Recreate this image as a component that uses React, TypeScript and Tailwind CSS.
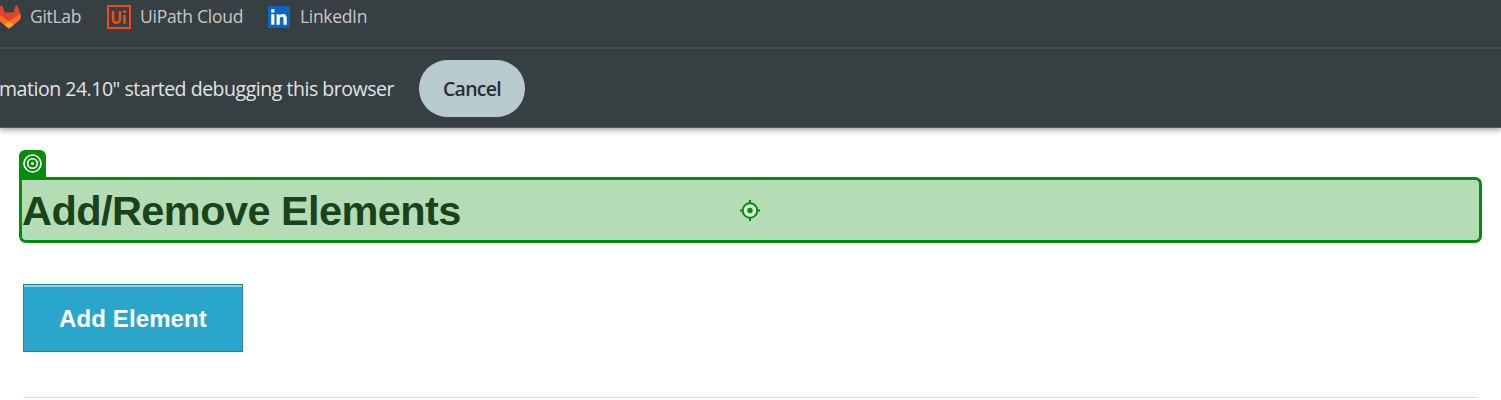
import React from "react";

function GitLabIcon() {
  return (
    <svg width="24" height="24" viewBox="0 0 24 24" className="block shrink-0">
      <path fill="#fc6d26" d="M23.4 9.3 20.2.9a.8.8 0 0 0-1.5.1l-2.200 6.700H7.500L5.300 1a.8.8 0 0 0-1.500-.1L.6 9.300a6 6 0 0 0 2 6.900L12 23.400l9.400-7.200a6 6 0 0 0 2-6.900Z" />
      <path fill="#e24329" d="M23.4 9.3 20.2.9a.8.8 0 0 0-1.5.1l-2.200 6.700H7.500L5.300 1a.8.8 0 0 0-1.500-.1L.6 9.300a10.800 10.800 0 0 1 4.300 1.900L12 16.600l7.100-5.400a10.800 10.800 0 0 1 4.300-1.900Z" />
      <path fill="#fca326" d="m7.400 20 4.600 3.500 4.600-3.500-4.600-3.400Z" />
    </svg>
  );
}

function UiPathIcon() {
  return (
    <svg width="24" height="24" viewBox="0 0 24 24" className="block shrink-0" fill="none" stroke="#fa4616">
      <rect x="1" y="1" width="22" height="22" strokeWidth="2" />
      <path d="M6 6v7.500c0 3 1.300 4.200 3.500 4.200S13 16.500 13 13.500V6" strokeWidth="2.600" />
      <path d="M17.500 10v8.800" strokeWidth="2.600" />
      <circle cx="17.500" cy="6.700" r="1.600" fill="#fa4616" stroke="none" />
    </svg>
  );
}

function LinkedInIcon() {
  return (
    <svg width="22" height="22" viewBox="0 0 22 22" className="block shrink-0">
      <rect width="22" height="22" rx="1.500" fill="#0a66c2" />
      <g fill="#fff">
        <circle cx="4.800" cy="4.900" r="1.900" />
        <path d="M3.200 8.200h3.200v10.500H3.200z" />
        <path d="M8.500 8.200h3v1.500c.6-1 1.700-1.700 3.300-1.700 3.200 0 3.900 2.100 3.900 4.900v5.800h-3.200v-5.200c0-1.300 0-2.800-1.700-2.800s-2 1.300-2 2.700v5.300H8.500z" />
      </g>
    </svg>
  );
}

function TargetIcon() {
  return (
    <svg width="19" height="19" viewBox="0 0 19 19" fill="none" stroke="#fff" strokeWidth="1.600" className="block">
      <circle cx="9.500" cy="9.500" r="8.500" />
      <circle cx="9.500" cy="9.500" r="4.800" />
      <circle cx="9.500" cy="9.500" r="1.500" fill="#fff" stroke="none" />
    </svg>
  );
}

function CrosshairIcon() {
  return (
    <svg width="22" height="22" viewBox="0 0 22 22" className="block">
      <circle cx="11" cy="11.500" r="7.300" fill="#d9eeda" stroke="#048c0c" strokeWidth="2" />
      <circle cx="11" cy="11.500" r="2.700" fill="#048c0c" />
      <path d="M11 1v3.500M11 18.500v3.500M1 11.500h3M18 11.500h3" stroke="#048c0c" strokeWidth="2" />
    </svg>
  );
}

export default function App() {
  return (
    <div className="h-[400px] w-[1501px] overflow-hidden bg-white">
      <header className="h-32 overflow-hidden border-b border-[#5b5350] bg-[#363f41] font-['Open_Sans','Noto_Sans',sans-serif] shadow-[0_1px_6px_1px_rgba(0,0,0,0.38)]">
        <nav className="flex h-[49px] items-start border-b-2 border-[#4a4a4b] text-[17.5px] leading-6 text-[#c7c7c7]">
          <a className="-ml-[3px] flex w-[110px] pt-[5px]">
            <GitLabIcon />
            <span className="-mt-px ml-[9px] tracking-[-0.3px]">GitLab</span>
          </a>
          <a className="flex w-[161px] pt-[5px]">
            <UiPathIcon />
            <span className="-mt-px ml-[9px] whitespace-nowrap tracking-[-0.27px]">UiPath Cloud</span>
          </a>
          <a className="flex pt-[6px]">
            <LinkedInIcon />
            <span className="-mt-0.5 ml-[10px] tracking-[-0.32px]">LinkedIn</span>
          </a>
        </nav>
        <div className="flex h-[79px] items-center">
          <span className="-ml-px w-[420px] whitespace-nowrap text-[19.5px] leading-[28px] tracking-[-0.47px] text-[#e3e3e3]">
            mation 24.10" started debugging this browser
          </span>
          <button className="h-[57px] w-[106px] rounded-full bg-[#b9cacf] text-[19.5px] leading-[28px] font-semibold tracking-[-0.7px] text-[#243035]">
            Cancel
          </button>
        </div>
      </header>
      <main className="px-[19px] pt-[22px] font-['Liberation_Sans',Arial,sans-serif]">
        <div className="flex h-[27px] w-[27px] items-center justify-center rounded-t-md bg-[#048c0c]">
          <TargetIcon />
        </div>
        <div className="relative h-[66px] rounded-r-[7px] rounded-bl-[7px] border-[3px] border-[#048c0c] bg-[#b4ddb5]">
          <h3 className="whitespace-nowrap text-[41.5px] leading-[61px] font-bold tracking-[-0.57px] text-[#1a431c]">Add/Remove Elements</h3>
          <div className="absolute top-[19px] left-[717px]">
            <CrosshairIcon />
          </div>
        </div>
        <button className="mt-[41px] ml-1 block h-[68px] w-[220px] border border-[#22839f] bg-[#2ba6cb] pt-0.5 text-[24px] font-bold tracking-[0.1px] text-white shadow-[inset_0_2px_0_rgba(255,255,255,0.5)]">
          Add Element
        </button>
        <hr className="mt-[45px] mr-1 ml-1 border-t border-[#dddddd]" />
      </main>
    </div>
  );
}
